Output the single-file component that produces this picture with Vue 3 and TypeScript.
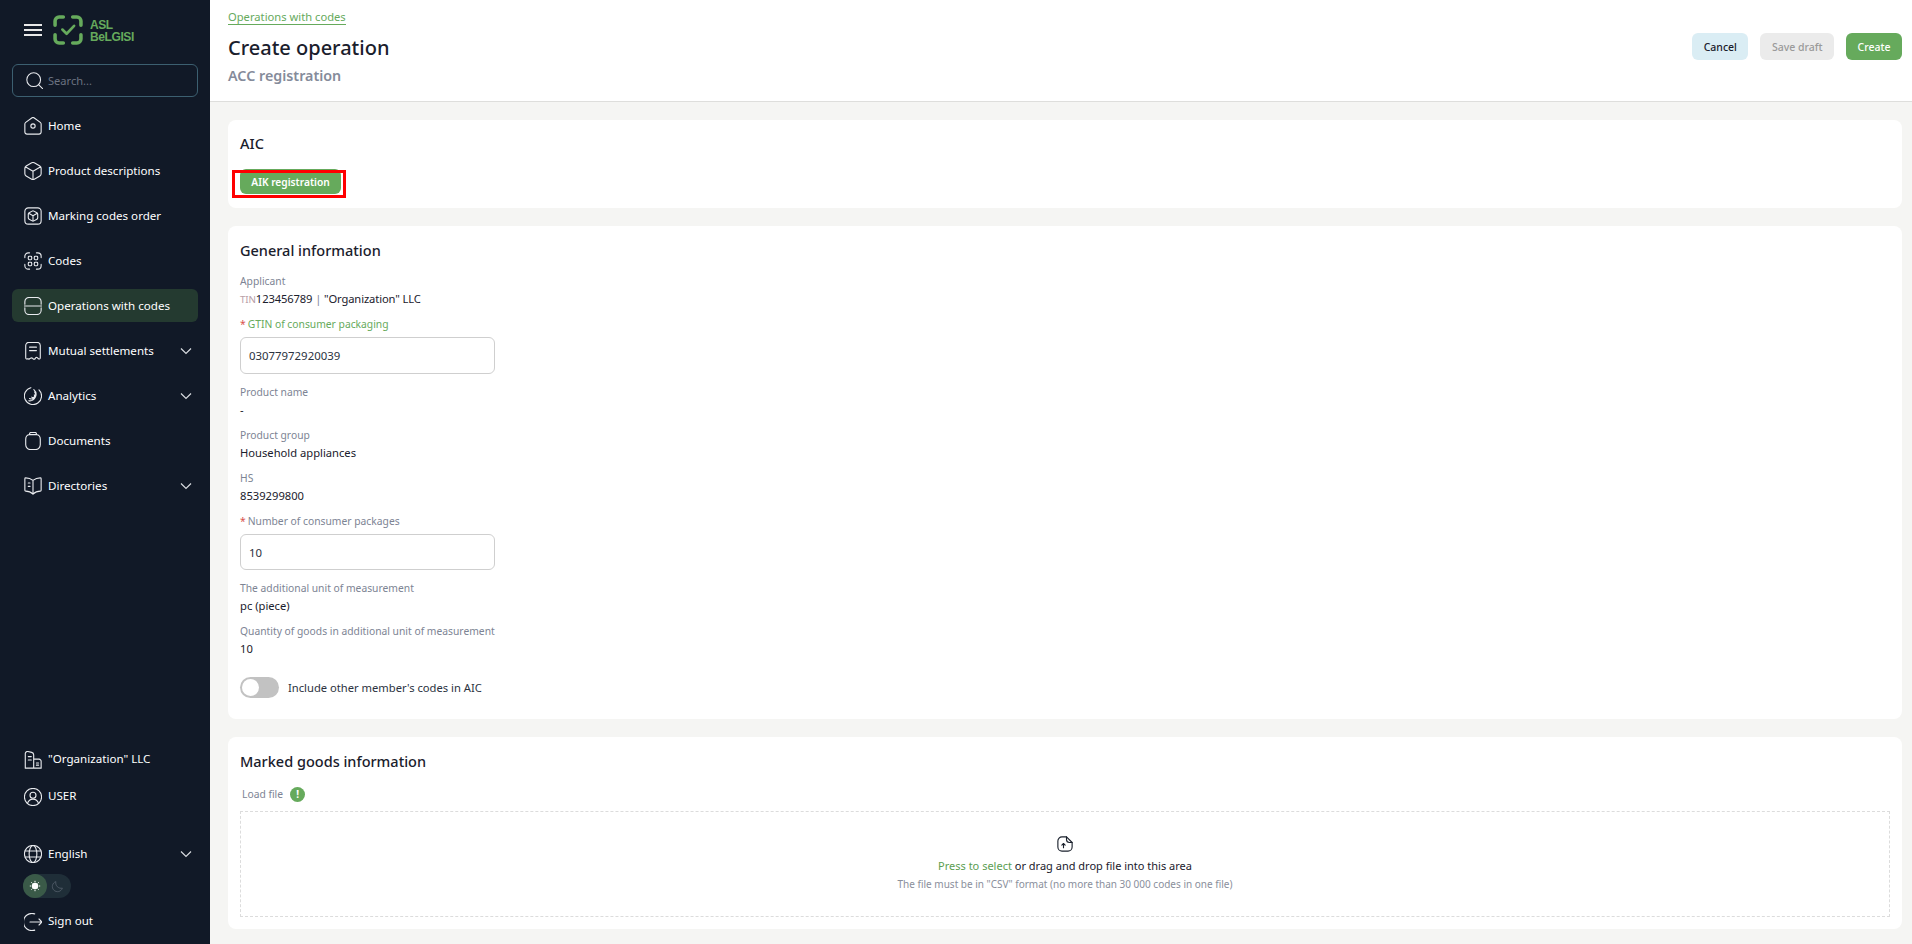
<template>
  <div class="layout">
    <aside class="sidebar">
      <div class="brand">
        <div class="burger"><span></span><span></span><span></span></div>
        <svg class="logo-mark" viewBox="0 0 32 32" fill="none">
          <path d="M11 2.200H6.500a4.300 4.300 0 0 0-4.300 4.300V11M21 2.200h4.500a4.300 4.300 0 0 1 4.300 4.300V11M11 29.800H6.500a4.300 4.300 0 0 1-4.300-4.300V21M21 29.800h4.500a4.300 4.300 0 0 0 4.300-4.300V21" stroke="#66aa5c" stroke-width="3.800" stroke-linecap="round" />
          <path d="M10 15.500l4.500 4.500 8-8.500" stroke="#66aa5c" stroke-width="2.800" stroke-linecap="round" stroke-linejoin="round" />
        </svg>
        <div class="logo-text"><span>ASL</span><span>BeLGISI</span></div>
      </div>

      <div class="search">
        <svg class="icon" viewBox="1.500 1.500 21 21" fill="none">
          <circle cx="11" cy="11" r="8.500" />
          <path d="M17 17l5 5" />
        </svg>
        <span>Search...</span>
      </div>

      <nav class="nav">
        <a v-for="item in navItems" :key="item.label" class="nav-item" :class="{ active: item.active }">
          <svg class="icon" viewBox="1.500 1.500 21 21" fill="none"><path :d="item.icon" /></svg>
          <span class="nav-label">{{ item.label }}</span>
          <svg v-if="item.arrow" class="chevron" viewBox="0 0 12 8" fill="none"><path d="M1 1.500l5 5 5-5" /></svg>
        </a>
      </nav>

      <div class="side-bottom">
        <a class="nav-item short">
          <svg class="icon" viewBox="1.500 1.500 21 21" fill="none"><path d="M3 21.500V4.500a2.500 2.500 0 0 1 3-2.400l4.500 1a3 3 0 0 1 2.300 2.900V21.500M3 21.500h18.500M6.500 8H10M6.500 12H10M12.800 11H19a2.500 2.500 0 0 1 2.500 2.500v8M16 15.500h2.500M16 18h2.500" /></svg>
          <span class="nav-label">"Organization" LLC</span>
        </a>
        <a class="nav-item short">
          <svg class="icon" viewBox="1.500 1.500 21 21" fill="none">
            <circle cx="12" cy="12" r="10" />
            <circle cx="12" cy="10" r="3.500" />
            <path d="M5.500 19.500c1-3 3.500-5 6.500-5s5.500 2 6.500 5" />
          </svg>
          <span class="nav-label">USER</span>
        </a>
        <a class="nav-item short lang">
          <svg class="icon" viewBox="1.500 1.500 21 21" fill="none">
            <circle cx="12" cy="12" r="10" />
            <ellipse cx="12" cy="12" rx="4.500" ry="10" />
            <path d="M2.800 8.500h18.400M2.800 15.500h18.400" />
          </svg>
          <span class="nav-label">English</span>
          <svg class="chevron" viewBox="0 0 12 8" fill="none"><path d="M1 1.500l5 5 5-5" /></svg>
        </a>
        <div class="theme">
          <span class="theme-on">
            <svg viewBox="0 0 12 12" width="12" height="12">
              <circle cx="6" cy="6" r="3.200" fill="#fff" />
              <path d="M6 .8v1.400M6 9.800v1.400M.8 6h1.400M9.800 6h1.400M2.300 2.300l1 1M8.700 8.700l1 1M2.300 9.700l1-1M8.700 3.300l1-1" stroke="#fff" stroke-width="1" />
            </svg>
          </span>
          <svg class="moon" viewBox="0 0 24 24" fill="none"><path d="M9 3a9.500 9.500 0 1 0 12 12A10 10 0 0 1 9 3z" /></svg>
        </div>
        <a class="nav-item short">
          <svg class="icon" viewBox="1.500 1.500 21 21" fill="none"><path d="M14 2.500a10 10 0 1 0 0 19M8.500 12h14M19 8.500l3.500 3.500-3.500 3.500" /></svg>
          <span class="nav-label">Sign out</span>
        </a>
      </div>
    </aside>

    <div class="page">
      <header class="top">
        <div>
          <a class="crumb">Operations with codes</a>
          <h1>Create operation</h1>
          <h2>ACC registration</h2>
        </div>
        <div class="actions">
          <button class="btn cancel">Cancel</button>
          <button class="btn draft">Save draft</button>
          <button class="btn create">Create</button>
        </div>
      </header>

      <main class="content">
        <section class="card aic">
          <h3>AIC</h3>
          <div class="type-row">
            <button class="btn create type-btn">AIK registration</button>
            <div class="marker"></div>
          </div>
        </section>

        <section class="card info">
          <h3>General information</h3>
          <div class="field first">
            <div class="label">Applicant</div>
            <div class="value applicant"><span class="tin">TIN</span>123456789 <span class="sep">|</span> "Organization" LLC</div>
          </div>
          <div class="input-field gtin">
            <div class="label green"><i>*</i>GTIN of consumer packaging</div>
            <div class="input tall">03077972920039</div>
          </div>
          <div class="field after-input">
            <div class="label">Product name</div>
            <div class="value">-</div>
          </div>
          <div v-for="f in staticFields" :key="f.label" class="field">
            <div class="label">{{ f.label }}</div>
            <div class="value">{{ f.value }}</div>
          </div>
          <div class="input-field">
            <div class="label"><i>*</i>Number of consumer packages</div>
            <div class="input">10</div>
          </div>
          <div class="field after-input">
            <div class="label">The additional unit of measurement</div>
            <div class="value">pc (piece)</div>
          </div>
          <div class="field">
            <div class="label">Quantity of goods in additional unit of measurement</div>
            <div class="value">10</div>
          </div>
          <div class="switch-row">
            <span class="switch"><span class="knob"></span></span>
            <span>Include other member's codes in AIC</span>
          </div>
        </section>

        <section class="card goods">
          <h3>Marked goods information</h3>
          <div class="load-label">Load file <span class="badge">!</span></div>
          <div class="drop">
            <svg class="file-icon" viewBox="0 0 24 24" fill="none">
              <path d="M14 2.500H8A5.500 5.500 0 0 0 2.500 8v8A5.500 5.500 0 0 0 8 21.500h8a5.500 5.500 0 0 0 5.500-5.500v-6z" />
              <path d="M14 2.500V6a4 4 0 0 0 4 4h3.500M10 17v-5.500M7.800 13.500L10 11.300l2.200 2.200" />
            </svg>
            <div class="drop-main"><span class="link">Press to select</span> or drag and drop file into this area</div>
            <div class="drop-hint">The file must be in "CSV" format (no more than 30 000 codes in one file)</div>
          </div>
        </section>
      </main>
    </div>
  </div>
</template>

<script setup lang="ts">
interface NavItem {
  label: string;
  icon: string;
  arrow?: boolean;
  active?: boolean;
}

const navItems: NavItem[] = [
  {
    label: "Home",
    icon: "M10.500 2.600a2.500 2.500 0 0 1 3 0l7 5.200a2.500 2.500 0 0 1 1 2V19a2.500 2.500 0 0 1-2.500 2.500H5A2.500 2.500 0 0 1 2.500 19V9.800a2.500 2.500 0 0 1 1-2zM14.500 12a2.500 2.500 0 1 1-5 0 2.500 2.500 0 0 1 5 0z",
  },
  {
    label: "Product descriptions",
    icon: "M10.500 2.500a3 3 0 0 1 3 0l6.500 3.700a3 3 0 0 1 1.500 2.600v6.400a3 3 0 0 1-1.500 2.600l-6.500 3.700a3 3 0 0 1-3 0L4 17.800a3 3 0 0 1-1.500-2.600V8.800A3 3 0 0 1 4 6.200zM3 7l9 5.200L21 7M12 12.200V22",
  },
  {
    label: "Marking codes order",
    icon: "M7 2.500H6.500a4 4 0 0 0-4 4v11a4 4 0 0 0 4 4h11a4 4 0 0 0 4-4v-11a4 4 0 0 0-4-4H7zM11 6.300a2 2 0 0 1 2 0l3.500 2a2 2 0 0 1 1 1.700v4a2 2 0 0 1-1 1.700l-3.500 2a2 2 0 0 1-2 0l-3.500-2a2 2 0 0 1-1-1.700v-4a2 2 0 0 1 1-1.700zM7 8.800l5 2.900 5-2.900M12 11.700V18",
  },
  {
    label: "Codes",
    icon: "M2.500 8V6.500a4 4 0 0 1 4-4H8M16 2.500h1.500a4 4 0 0 1 4 4V8M21.500 16v1.500a4 4 0 0 1-4 4H16M8 21.500H6.500a4 4 0 0 1-4-4V16M7.500 6.500h2a1 1 0 0 1 1 1v2a1 1 0 0 1-1 1h-2a1 1 0 0 1-1-1v-2a1 1 0 0 1 1-1zM14.500 6.500h2a1 1 0 0 1 1 1v2a1 1 0 0 1-1 1h-2a1 1 0 0 1-1-1v-2a1 1 0 0 1 1-1zM7.500 13.500h2a1 1 0 0 1 1 1v2a1 1 0 0 1-1 1h-2a1 1 0 0 1-1-1v-2a1 1 0 0 1 1-1zM14.500 13.500h2a1 1 0 0 1 1 1v2a1 1 0 0 1-1 1h-2a1 1 0 0 1-1-1v-2a1 1 0 0 1 1-1z",
  },
  {
    label: "Operations with codes",
    active: true,
    icon: "M2.500 10V7a5 5 0 0 1 5-5h9a5 5 0 0 1 5 5v3M2.500 14v3a5 5 0 0 0 5 5h9a5 5 0 0 0 5-5v-3M2 12h20",
  },
  {
    label: "Mutual settlements",
    arrow: true,
    icon: "M3.500 5.500A3.500 3.500 0 0 1 7 2h10a3.500 3.500 0 0 1 3.500 3.500V20c0 1.300-1.300 1.800-2.200 1l-1.300-1.200c-.6-.5-1.300-.5-1.800 0L14.500 21c-.8.700-1.700.7-2.500 0l-.5-.5c-.8-.7-1.700-.7-2.500 0l-1 .5c-.6.500-1.300.500-1.800 0L5.700 21c-.9.800-2.200.3-2.200-1zM8 7.500h8M8 11.500h8",
  },
  {
    label: "Analytics",
    arrow: true,
    icon: "M9.500 2.300A10 10 0 1 0 19 4.900M13 4.600A7.500 7.500 0 0 1 7 17.600M14 7.400A5 5 0 0 1 8 15M13.500 10.700a2 2 0 0 1-3 2.600",
  },
  {
    label: "Documents",
    icon: "M8 4.500A5.500 5.500 0 0 0 3.500 10v6.500A5.500 5.500 0 0 0 9 22h6a5.500 5.500 0 0 0 5.500-5.500V10A5.500 5.500 0 0 0 16 4.500M8 4.500V3.600A1.600 1.600 0 0 1 9.600 2h4.800A1.600 1.600 0 0 1 16 3.600v.9M8 4.500h8",
  },
  {
    label: "Directories",
    arrow: true,
    icon: "M12 5.500C9.500 3.500 6.500 2.500 3.500 2.500a1 1 0 0 0-1 1V17a1 1 0 0 0 1 1c3 0 6 1 8.500 3.500 2.500-2.500 5.500-3.500 8.500-3.500a1 1 0 0 0 1-1V3.500a1 1 0 0 0-1-1c-3 0-6 1-8.500 3zM12 5.500v16M6.500 8.500h2M6.500 12.500h2",
  },
];

const staticFields = [
  { label: "Product group", value: "Household appliances" },
  { label: "HS", value: "8539299800" },
];
</script>

<style>
html,
body {
  margin: 0;
  background: #f5f5f3;
}
</style>

<style scoped>
* {
  box-sizing: border-box;
}

.layout {
  display: flex;
  height: 100vh;
  overflow: hidden;
  font-family: "Noto Sans", "Open Sans", sans-serif;
  color: #1a202c;
}

/* ===== sidebar ===== */
.sidebar {
  width: 210px;
  flex: none;
  background: #111927;
  color: #fff;
  display: flex;
  flex-direction: column;
  padding: 0 12px;
}

.brand {
  display: flex;
  align-items: center;
  height: 64px;
  padding: 0 0 4px 12px;
}

.burger {
  width: 18px;
  display: flex;
  flex-direction: column;
  gap: 3.500px;
}

.burger span {
  height: 1.500px;
  background: #e8e8e8;
}

.logo-mark {
  width: 30px;
  height: 30px;
  margin-left: 11px;
}

.logo-text {
  display: flex;
  flex-direction: column;
  margin-left: 7px;
  padding-top: 2px;
  font-family: "Liberation Sans", sans-serif;
  font-weight: 700;
  font-size: 12px;
  line-height: 12.500px;
  letter-spacing: -0.4px;
  color: #66aa5c;
}

.search {
  height: 33px;
  border: 1px solid #3c5f70;
  border-radius: 6px;
  display: flex;
  align-items: center;
  gap: 5px;
  padding-left: 13px;
  font-size: 11.100px;
  color: #6b7280;
}

.search .icon {
  width: 17px;
  height: 17px;
}

.icon {
  width: 18px;
  height: 18px;
  flex: none;
  stroke: #e8eaee;
  stroke-width: 1.300;
  stroke-linecap: round;
  stroke-linejoin: round;
}

.nav {
  display: flex;
  flex-direction: column;
  gap: 12px;
  margin-top: 12px;
}

.nav-item {
  display: flex;
  align-items: center;
  height: 33px;
  padding: 0 6px 0 12px;
  border-radius: 6px;
  font-size: 11.600px;
  gap: 6px;
  color: #fff;
}

.nav-item.active {
  background: #243a30;
}

.nav-label {
  flex: 1;
  white-space: nowrap;
  margin-bottom: 1px;
}

.side-bottom .nav-label {
  margin-bottom: 2px;
}

.chevron {
  width: 12px;
  height: 8px;
  stroke: #d8dbe0;
  stroke-width: 1.200;
}

.side-bottom {
  margin-top: auto;
  padding-bottom: 4px;
  display: flex;
  flex-direction: column;
}

.nav-item.short {
  height: 37px;
}

.nav-item.lang {
  margin-top: 24px;
  height: 30px;
}

.theme {
  margin: 5px 0 5px 11px;
  width: 48px;
  height: 24px;
  flex: none;
  border-radius: 12px;
  background: #1f2e38;
  display: flex;
  align-items: center;
}

.theme-on {
  width: 24px;
  height: 24px;
  border-radius: 50%;
  background: #3a5a48;
  display: flex;
  align-items: center;
  justify-content: center;
}

.moon {
  width: 13px;
  height: 13px;
  margin-left: 4px;
  stroke: #55606c;
  stroke-width: 1.500;
}

/* ===== header ===== */
.page {
  flex: 1;
  min-width: 0;
  display: flex;
  flex-direction: column;
}

.top {
  height: 102px;
  flex: none;
  background: #fff;
  border-bottom: 1px solid #dededc;
  display: flex;
  justify-content: space-between;
  padding: 4px 10px 0 18px;
}

.crumb {
  display: inline-block;
  font-size: 11.200px;
  line-height: 15px;
  color: #66aa5c;
  border-bottom: 1px solid #66aa5c;
}

h1 {
  margin: 8px 0 0;
  font-size: 20px;
  line-height: 28px;
  font-weight: 500;
  color: #1a202c;
}

h2 {
  margin: 4px 0 0;
  font-size: 14.300px;
  line-height: 20px;
  font-weight: 600;
  color: #858b9a;
}

.actions {
  display: flex;
  gap: 12px;
  padding-top: 29px;
}

.btn {
  height: 27px;
  border: 0;
  border-radius: 6px;
  font-family: inherit;
  font-size: 10.500px;
  font-weight: 500;
  padding: 0 11.500px;
}

.cancel {
  background: #daedf4;
  color: #1a202c;
}

.draft {
  background: #ebebeb;
  color: #9a9a9a;
}

.create {
  background: #66aa5c;
  color: #fff;
}

/* ===== cards ===== */
.content {
  padding: 18px 10px 0 18px;
  display: flex;
  flex-direction: column;
  gap: 18px;
}

.card {
  background: #fff;
  border-radius: 8px;
  padding: 0 12px;
}

h3 {
  margin: -1px 0 0;
  font-size: 14.500px;
  line-height: 20px;
  font-weight: 500;
  color: #1a202c;
}

.aic {
  height: 88px;
  padding-top: 14px;
}

.type-row {
  position: relative;
  margin-top: 16px;
  height: 25px;
}

.type-btn {
  display: block;
  height: 25px;
  width: 101px;
  padding: 0;
  font-size: 10.200px;
  font-weight: 600;
}

.marker {
  position: absolute;
  left: -8px;
  top: 1px;
  width: 114px;
  height: 28px;
  border: 3px solid #f00;
}

.info {
  height: 493px;
  padding-top: 15px;
}

.label {
  font-size: 10.300px;
  line-height: 14px;
  color: #7d8494;
  white-space: nowrap;
}

.label.green {
  color: #66aa5c;
}

.label i {
  font-style: normal;
  color: #d9534f;
  margin-right: 2px;
}

.value {
  margin-top: 3px;
  font-size: 11.200px;
  line-height: 16px;
  color: #1a202c;
}

.value.applicant {
  letter-spacing: -0.12px;
}

.tin {
  color: #b9a0a8;
  font-size: 9.800px;
}

.sep {
  color: #7d8494;
}

.field {
  margin-top: 10px;
}

.field.first {
  margin-top: 14px;
}

.field.after-input {
  margin-top: 11px;
}

.input-field {
  margin-top: 10px;
}

.input-field.gtin {
  margin-top: 9px;
}

.input {
  margin-top: 6px;
  width: 255px;
  height: 36px;
  border: 1px solid #cfcfcf;
  border-radius: 6px;
  display: flex;
  align-items: center;
  padding-left: 8px;
  font-size: 11.400px;
  color: #2b3240;
}

.input.tall {
  height: 37px;
}

.switch-row {
  display: flex;
  align-items: center;
  gap: 9px;
  margin-top: 20px;
  font-size: 11.200px;
  color: #2b3240;
}

.switch {
  width: 39px;
  height: 21px;
  border-radius: 11px;
  background: #c2c2c2;
  display: flex;
  align-items: center;
  padding-left: 2px;
}

.knob {
  width: 17px;
  height: 17px;
  border-radius: 50%;
  background: #fff;
}

.goods {
  height: 192px;
  padding-top: 15px;
}

.load-label {
  display: flex;
  align-items: center;
  gap: 7px;
  margin-top: 15px;
  padding-left: 2px;
  height: 16px;
  font-size: 10.300px;
  color: #7d8494;
}

.badge {
  width: 15px;
  height: 15px;
  border-radius: 50%;
  background: #66aa5c;
  color: #fff;
  font-size: 10px;
  font-weight: 700;
  display: flex;
  align-items: center;
  justify-content: center;
}

.drop {
  margin-top: 9px;
  height: 106px;
  border: 1px dashed #dcdcdc;
  display: flex;
  flex-direction: column;
  align-items: center;
  padding-top: 23px;
}

.file-icon {
  width: 18px;
  height: 18px;
  stroke: #1a202c;
  stroke-width: 1.500;
  stroke-linecap: round;
  stroke-linejoin: round;
}

.drop-main {
  margin-top: 5px;
  font-size: 11px;
  line-height: 16px;
  color: #1a202c;
}

.link {
  color: #5c9e52;
}

.drop-hint {
  margin-top: 3px;
  font-size: 10px;
  line-height: 15px;
  color: #8a8f9c;
}
</style>
